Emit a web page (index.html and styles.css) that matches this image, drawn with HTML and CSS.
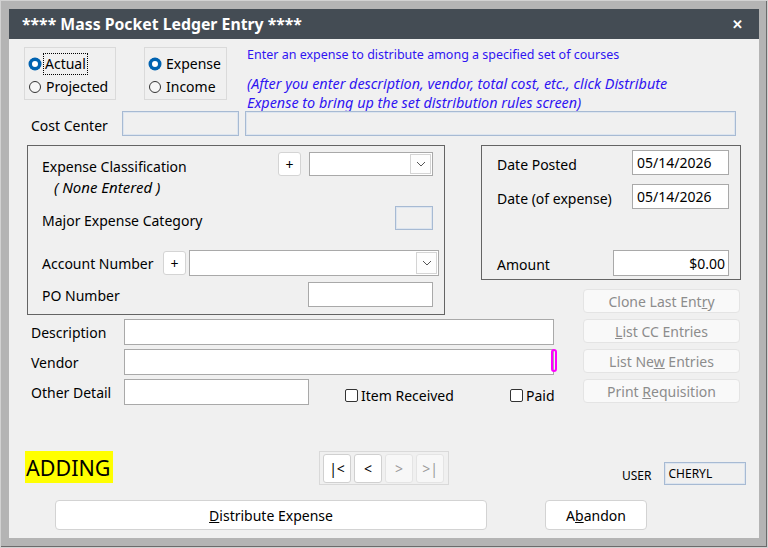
FILE: index.html
```html
<!DOCTYPE html>
<html lang="en">
<head>
<meta charset="UTF-8">
<title>Mass Pocket Ledger Entry</title>
<link rel="stylesheet" href="styles.css">
</head>
<body>
<div class="frame">
  <div class="window">
    <div class="titlebar">
      <span class="title">**** Mass Pocket Ledger Entry ****</span>
      <span class="close">✕</span>
    </div>
    <div class="content">

      <div class="top-row">
        <div class="opt-group g1">
          <div class="opt"><span class="radio on"></span><span class="focus">Actual</span></div>
          <div class="opt"><span class="radio"></span><span>Projected</span></div>
        </div>
        <div class="opt-group g2">
          <div class="opt"><span class="radio on"></span><span>Expense</span></div>
          <div class="opt"><span class="radio"></span><span>Income</span></div>
        </div>
        <div class="notes">
          <p class="note-main">Enter an expense to distribute among a specified set of courses</p>
          <p class="note-sub">(After you enter description, vendor, total cost, etc., click Distribute<br>Expense to bring up the set distribution rules screen)</p>
        </div>
      </div>

      <div class="cost-row">
        <span class="lbl cost-lbl">Cost Center</span>
        <span class="field dis cc-code"></span>
        <span class="field dis cc-name"></span>
      </div>

      <div class="main-grid">
        <div class="box left-box">
          <div class="lb-row class-row">
            <span class="lbl grow">Expense Classification</span>
            <button class="plus">+</button>
            <span class="combo class-combo"><span class="drop"><svg width="10" height="6" viewBox="0 0 10 6"><polyline points="1,1 5,5 9,1" fill="none" stroke="#555" stroke-width="1"/></svg></span></span>
          </div>
          <div class="none">( None Entered )</div>
          <div class="lb-row major-row">
            <span class="lbl grow">Major Expense Category</span>
            <span class="field dis major-box"></span>
          </div>
          <div class="lb-row acct-row">
            <span class="lbl acct-lbl">Account Number</span>
            <button class="plus">+</button>
            <span class="combo acct-combo"><span class="drop"><svg width="10" height="6" viewBox="0 0 10 6"><polyline points="1,1 5,5 9,1" fill="none" stroke="#555" stroke-width="1"/></svg></span></span>
          </div>
          <div class="lb-row po-row">
            <span class="lbl grow">PO Number</span>
            <span class="field po-field"></span>
          </div>
        </div>

        <div class="box right-box">
          <div class="rb-row posted-row">
            <span class="lbl">Date Posted</span>
            <span class="field date-field">05/14/2026</span>
          </div>
          <div class="rb-row exp-row">
            <span class="lbl">Date (of expense)</span>
            <span class="field date-field">05/14/2026</span>
          </div>
          <div class="rb-row amount-row">
            <span class="lbl">Amount</span>
            <span class="field amount-field">$0.00</span>
          </div>
        </div>

        <button class="side-btn clone-btn">Clone Last Ent<u>r</u>y</button>

        <div class="line-row desc-row">
          <span class="lbl line-lbl">Description</span>
          <span class="field wide-field"></span>
        </div>
        <button class="side-btn cc-btn"><u>L</u>ist CC Entries</button>

        <div class="line-row vendor-row">
          <span class="lbl line-lbl">Vendor</span>
          <span class="field wide-field"></span>
          <span class="marker"></span>
        </div>
        <button class="side-btn new-btn">List Ne<u>w</u> Entries</button>

        <div class="line-row other-row">
          <span class="lbl line-lbl">Other Detail</span>
          <span class="field other-field"></span>
          <span class="check item-check"><span class="box-mark"></span>Item Received</span>
          <span class="check"><span class="box-mark"></span>Paid</span>
        </div>
        <button class="side-btn print-btn">Print <u>R</u>equisition</button>
      </div>

      <div class="status-row">
        <span class="mode">ADDING</span>
        <div class="nav">
          <button class="nav-btn">|&lt;</button>
          <button class="nav-btn">&lt;</button>
          <button class="nav-btn off">&gt;</button>
          <button class="nav-btn off">&gt;|</button>
        </div>
        <span class="user-lbl">USER</span>
        <span class="user-box">CHERYL</span>
      </div>

      <div class="action-row">
        <button class="act-btn distribute"><u>D</u>istribute Expense</button>
        <button class="act-btn abandon">A<u>b</u>andon</button>
      </div>

    </div>
  </div>
</div>
</body>
</html>
```

FILE: styles.css
```css
* {
  box-sizing: border-box;
}
body {
  margin: 0;
  width: 768px;
  height: 548px;
  font-family: "Noto Sans", "Open Sans", sans-serif;
  font-size: 14px;
  color: #000;
  overflow: hidden;
}
p {
  margin: 0;
}
button {
  font-family: inherit;
  font-size: 14px;
  padding: 0;
  cursor: default;
}

.frame {
  width: 768px;
  height: 548px;
  background: #b4b4b4;
  border: 1px solid #d2d2d2;
  box-shadow: inset -1px -1px 0 #6b6b6b;
  padding: 8px 8px 9px 8px;
}
.window {
  height: 529px;
  background: #f0f0f0;
  display: flex;
  flex-direction: column;
}

.titlebar {
  height: 30px;
  background: #444c54;
  color: #fff;
  display: flex;
  align-items: center;
  justify-content: space-between;
  padding: 0 16px 0 13px;
}
.title {
  font-weight: bold;
  font-size: 15.8px;
}
.close {
  font-weight: bold;
  font-size: 13px;
}

.content {
  flex: 1;
  padding: 6px 0 0 15px;
}

/* top options */
.top-row {
  display: flex;
  align-items: flex-start;
  height: 63px;
}
.opt-group {
  margin-top: 2px;
  height: 53px;
  border: 1px solid #dadada;
  padding: 4px 0 0 4px;
}
.g1 {
  width: 92px;
}
.g2 {
  width: 83px;
  margin-left: 28px;
}
.opt {
  height: 23px;
  display: flex;
  align-items: center;
  gap: 5px;
}
.radio {
  width: 12px;
  height: 12px;
  border-radius: 50%;
  border: 1px solid #333;
  background: #f7f7f7;
  flex: none;
}
.radio.on {
  border: 3px solid #0063b1;
  background: #fff;
  box-shadow: 0 0 0 0.5px #0063b1;
}
.focus {
  outline: 1px dotted #000;
  outline-offset: 0;
  padding: 0 1px;
  margin-left: -2px;
  line-height: 20px;
}
.notes {
  margin-left: 20px;
  height: 65px;
  color: #2f14f2;
  white-space: nowrap;
}
.note-main {
  font-size: 12.5px;
  line-height: 18px;
  padding-top: 1px;
}
.note-sub {
  margin-top: 10px;
  font-size: 14.4px;
  font-style: italic;
  line-height: 19px;
}

/* generic fields */
.lbl {
  white-space: nowrap;
}
.grow {
  flex: 1;
}
.field {
  display: flex;
  align-items: center;
  background: #fff;
  border: 1px solid #a9a9a9;
  white-space: nowrap;
}
.field.dis {
  background: #f0f0f0;
  border: 1px solid #a7bad3;
  box-shadow: inset 0 0 0 1px #dde5ef;
}

.cost-row {
  margin: 3px 0 0 7px;
  height: 25px;
  display: flex;
  align-items: center;
}
.cost-lbl {
  width: 91px;
  padding-top: 3px;
}
.cc-code {
  width: 117px;
  height: 25px;
}
.cc-name {
  width: 491px;
  height: 25px;
  margin-left: 6px;
}

/* main grid */
.main-grid {
  margin: 9px 0 0 3px;
  display: grid;
  grid-template-columns: 454px 102px 158px;
  grid-template-rows: 135px 39px 30px 30px 26px;
}
.box {
  border: 1px solid #646464;
}
.left-box {
  grid-column: 1;
  grid-row: 1 / 3;
  width: 418px;
  height: 170px;
  padding: 0 11px 0 14px;
}
.lb-row {
  display: flex;
  align-items: center;
}
.class-row {
  margin-top: 6px;
  height: 24px;
}
.class-row .lbl {
  padding-top: 4px;
}
.plus {
  width: 23px;
  height: 24px;
  background: #fff;
  border: 1px solid #d4d4d4;
  border-radius: 3px;
  font-size: 14px;
}
.combo {
  display: flex;
  justify-content: flex-end;
  align-items: center;
  background: #fff;
  border: 1px solid #a9a9a9;
  padding-right: 1px;
}
.drop {
  width: 21px;
  height: calc(100% - 2px);
  border: 1px solid #d4d4d4;
  display: flex;
  align-items: center;
  justify-content: center;
  background: #fdfdfd;
}
.class-combo {
  width: 124px;
  height: 24px;
  margin-left: 8px;
}
.none {
  margin: 1px 0 0 12px;
  line-height: 20px;
  font-size: 15px;
  font-style: italic;
}
.major-row {
  margin-top: 9px;
  height: 24px;
}
.major-row .lbl {
  padding-top: 5px;
}
.major-box {
  width: 38px;
  height: 24px;
}
.acct-row {
  margin-top: 20px;
  height: 26px;
  margin-right: -6px;
}
.acct-lbl {
  width: 121px;
}
.acct-row .plus {
  height: 24px;
}
.acct-combo {
  width: 250px;
  height: 26px;
  margin-left: 3px;
}
.po-row {
  margin-top: 6px;
  height: 25px;
}
.po-row .lbl {
  padding-top: 2px;
}
.po-field {
  width: 125px;
  height: 25px;
}

.right-box {
  grid-column: 2 / 4;
  grid-row: 1;
  width: 260px;
  height: 135px;
  padding: 0 11px 0 15px;
}
.rb-row {
  display: flex;
  align-items: center;
  justify-content: space-between;
}
.rb-row .lbl {
  padding-top: 3px;
}
.posted-row {
  margin-top: 4px;
  height: 25px;
}
.exp-row {
  margin-top: 9px;
  height: 25px;
}
.date-field {
  width: 97px;
  height: 25px;
  padding-left: 4px;
}
.amount-row {
  margin-top: 41px;
  height: 26px;
}
.amount-field {
  width: 116px;
  height: 26px;
  justify-content: flex-end;
  padding-right: 3px;
}

.side-btn {
  grid-column: 3;
  width: 157px;
  height: 24px;
  background: #f9f9f9;
  border: 1px solid #e4e4e4;
  border-radius: 4px;
  color: #8c8c8c;
}
.clone-btn {
  grid-row: 2;
  margin-top: 9px;
}
.cc-btn {
  grid-row: 3;
}
.new-btn {
  grid-row: 4;
}
.print-btn {
  grid-row: 5;
}

.line-row {
  grid-column: 1 / 3;
  height: 26px;
  display: flex;
  align-items: center;
  padding-left: 4px;
  position: relative;
}
.desc-row {
  grid-row: 3;
}
.vendor-row {
  grid-row: 4;
}
.other-row {
  grid-row: 5;
}
.line-lbl {
  width: 93px;
}
.wide-field {
  width: 430px;
  height: 26px;
}
.other-field {
  width: 185px;
  height: 26px;
}
.marker {
  position: absolute;
  left: 524px;
  top: 0;
  width: 6px;
  height: 23px;
  border: 2px solid #ff00ff;
  border-radius: 3px;
}
.check {
  display: flex;
  align-items: center;
  gap: 3px;
  margin-top: 6px;
}
.item-check {
  margin-left: 36px;
  width: 165px;
}
.box-mark {
  width: 13px;
  height: 13px;
  border: 1px solid #333;
  border-radius: 2px;
  background: #fff;
}

/* bottom */
.status-row {
  margin: 46px 0 0 1px;
  display: flex;
  align-items: flex-start;
  height: 34px;
}
.mode {
  width: 88px;
  height: 32px;
  background: #ffff00;
  font-size: 21.5px;
  line-height: 33px;
  padding-left: 1px;
}
.nav {
  margin-left: 206px;
  display: flex;
  gap: 3px;
  padding: 2px 4px 0 3px;
  width: 130px;
  height: 34px;
  border: 1px solid #d9d9d9;
}
.nav-btn {
  width: 28px;
  height: 29px;
  background: #fff;
  border: 1px solid #d0d0d0;
  border-radius: 3px;
  font-size: 14px;
}
.nav-btn.off {
  background: #f7f7f7;
  border-color: #e4e4e4;
  color: #9a9a9a;
}
.user-lbl {
  margin: 16px 0 0 173px;
  font-size: 12px;
}
.user-box {
  margin: 11px 0 0 12px;
  width: 82px;
  height: 23px;
  border: 1px solid #a7bad3;
  box-shadow: inset 0 0 0 1px #dde5ef;
  font-size: 12px;
  line-height: 21px;
  padding-left: 4px;
}

.action-row {
  margin: 15px 0 0 31px;
  display: flex;
}
.act-btn {
  height: 30px;
  background: #fff;
  border: 1px solid #d3d3d3;
  border-radius: 4px;
}
.distribute {
  width: 432px;
}
.abandon {
  width: 102px;
  margin-left: 58px;
}
```
